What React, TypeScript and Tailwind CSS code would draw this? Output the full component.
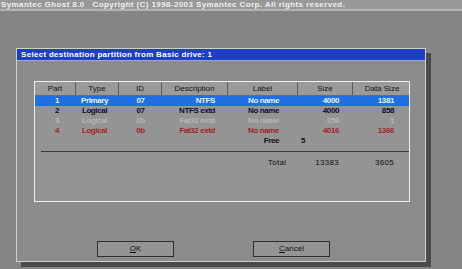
import React from 'react';

const cols = 'grid grid-cols-[41px_43px_43px_66px_70px_55px_58px]';

const rows = [
  { part: '1', type: 'Primary', id: '07', desc: 'NTFS', label: 'No name', size: '4000', data: '1381', tone: 'sel' },
  { part: '2', type: 'Logical', id: '07', desc: 'NTFS extd', label: 'No name', size: '4000', data: '858', tone: 'black' },
  { part: '3', type: 'Logical', id: '0b', desc: 'Fat32 extd', label: 'No name', size: '250', data: '1', tone: 'gray' },
  { part: '4', type: 'Logical', id: '0b', desc: 'Fat32 extd', label: 'No name', size: '4016', data: '1366', tone: 'red' },
];

const toneClass: Record<string, string> = {
  sel: 'bg-[#1f6fe3] text-[#e4f6ff]',
  black: 'text-[#101010]',
  gray: 'text-[#b4b4b4]',
  red: 'text-[#a3222b]',
};

export default function App() {
  return (
    <div
      className="h-[269px] w-[462px] overflow-hidden bg-[#858585] font-bold"
      style={{ fontFamily: '"Liberation Sans", Arial, sans-serif' }}
    >
      {/* top status bar */}
      <div className="h-[11px] border-b-2 border-[#b4b4b4] bg-[#989898] pl-[1px] text-[8px] leading-[9px] tracking-[0.4px] text-[#f0f0f0]">
        Symantec Ghost 8.0&nbsp;&nbsp;&nbsp;Copyright (C) 1998-2003 Symantec Corp. All rights reserved.
      </div>

      {/* dialog */}
      <div className="ml-[16px] mt-[37px] h-[214px] w-[410px] border border-[#d0d0d0] bg-[#8b8b8b] shadow-[5px_5px_0_#4a4a4a]">
        <div className="h-[12px] border-b border-[#9aa8e0] bg-[#1d3fc2] pl-[4px] text-[8px] leading-[11px] tracking-[0.3px] text-white">
          Select destination partition from Basic drive: 1
        </div>

        <div className="ml-[17px] mt-[20px] h-[121px] w-[376px] border border-[#f0f0f0] bg-[#949494] text-[8px] tracking-[-0.4px]">
          <div className={`${cols} h-[14px] border-b border-[#6a6a6a] bg-[#9a9a9a] font-normal leading-[13px] tracking-[0px] text-[#141414]`}>
            {['Part', 'Type', 'ID', 'Description', 'Label', 'Size', 'Data Size'].map((h, i) => (
              <div key={h} className={`text-center ${i < 6 ? 'border-r border-[#5e5e5e]' : ''}`}>
                {h}
              </div>
            ))}
          </div>

          {rows.map((r) => (
            <div key={r.part} className={`${cols} h-[10px] leading-[10px] ${toneClass[r.tone]}`}>
              <div className="pl-[3px] text-center">{r.part}</div>
              <div className="pr-[6px] text-center">{r.type}</div>
              <div className="text-center">{r.id}</div>
              <div className="pr-[13px] text-right">{r.desc}</div>
              <div className="pr-[19px] text-right">{r.label}</div>
              <div className="pr-[14px] text-right">{r.size}</div>
              <div className="pr-[17px] text-right">{r.data}</div>
            </div>
          ))}

          <div className={`${cols} h-[10px] leading-[10px] text-[#101010]`}>
            <div className="col-span-5 pr-[19px] text-right">Free</div>
            <div className="pl-[3px]">5</div>
          </div>

          <div className="ml-[6px] mt-[5px] border-t border-[#3c3c3c]" />

          <div className={`${cols} mt-[6px] h-[10px] leading-[10px] font-normal tracking-[0.3px] text-[#101010]`}>
            <div className="col-span-5 pl-[233px]">Total</div>
            <div className="pr-[14px] text-right">13383</div>
            <div className="pr-[17px] text-right">3605</div>
          </div>
        </div>

        <div className="mt-[39px] flex h-[16px] text-[8px]">
          <button className="ml-[80px] h-[16px] w-[77px] border border-[#2e2e2e] bg-[#949494] font-normal leading-[14px] text-[#111]">
            <span className="underline">O</span>K
          </button>
          <button className="ml-[79px] h-[16px] w-[77px] border border-[#2e2e2e] bg-[#949494] font-normal leading-[14px] text-[#111]">
            <span className="underline">C</span>ancel
          </button>
        </div>
      </div>
    </div>
  );
}
